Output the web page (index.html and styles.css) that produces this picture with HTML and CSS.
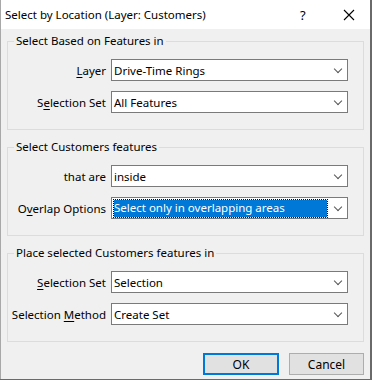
FILE: index.html
```html
<!DOCTYPE html>
<html>
<head>
<meta charset="utf-8">
<link rel="stylesheet" href="styles.css">
</head>
<body>
<div class="window">
  <div class="titlebar">
    <span class="title">Select by Location (Layer: Customers)</span>
    <span class="help">?</span>
    <span class="close"><svg width="12" height="12" viewBox="0 0 12 12"><path d="M1 1 L11 11 M11 1 L1 11" stroke="#000" stroke-width="1.1" fill="none"/></svg></span>
  </div>
  <div class="content">
    <fieldset class="group g1">
      <legend>Select Based on Features in</legend>
      <div class="row">
        <label><u>L</u>ayer</label>
        <div class="combo"><span class="val">Drive-Time Rings</span><span class="chev"></span></div>
      </div>
      <div class="row">
        <label>S<u>e</u>lection Set</label>
        <div class="combo"><span class="val">All Features</span><span class="chev"></span></div>
      </div>
    </fieldset>
    <fieldset class="group g2">
      <legend>Select Customers features</legend>
      <div class="row">
        <label>that are</label>
        <div class="combo"><span class="val">inside</span><span class="chev"></span></div>
      </div>
      <div class="row">
        <label>O<u>v</u>erlap Options</label>
        <div class="combo focused"><span class="val sel">Select only in overlapping areas</span><span class="chev"></span></div>
      </div>
    </fieldset>
    <fieldset class="group g3">
      <legend>Place selected Customers features in</legend>
      <div class="row">
        <label><u>S</u>election Set</label>
        <div class="combo"><span class="val">Selection</span><span class="chev"></span></div>
      </div>
      <div class="row">
        <label>Selection <u>M</u>ethod</label>
        <div class="combo"><span class="val">Create Set</span><span class="chev"></span></div>
      </div>
    </fieldset>
    <div class="buttons">
      <button class="btn ok">OK</button>
      <button class="btn">Cancel</button>
    </div>
  </div>
</div>
</body>
</html>
```
FILE: styles.css
```css
html, body {
  margin: 0;
  padding: 0;
  background: #6a6a6a;
  width: 372px;
  height: 380px;
  overflow: hidden;
}
.window {
  width: 369px;
  height: 379px;
  border-left: 1px solid #a8a8a8;
  background: #f0f0f0;
  font-family: "Noto Sans", sans-serif;
  font-size: 11.5px;
  color: #000;
  display: flex;
  flex-direction: column;
}
.titlebar {
  height: 29px;
  background: #fff;
  display: flex;
  align-items: center;
  flex-shrink: 0;
}
.title {
  padding-left: 4px;
  font-size: 11.5px;
  flex: 1;
}
.help {
  font-size: 13px;
  width: 14px;
  margin-right: 29px;
}
.close {
  width: 12px;
  height: 12px;
  margin-right: 15px;
  display: flex;
}
.content {
  padding: 4px 0 0 6px;
  display: flex;
  flex-direction: column;
}
.group {
  margin: 0;
  width: 357px;
  box-sizing: border-box;
  border: 1px solid #dcdcdc;
  padding: 10px 0 16px 0;
  display: flex;
  flex-direction: column;
  gap: 10px;
}
.g2, .g3 { margin-top: 9px; }
legend {
  margin-left: 6px;
  padding: 0 2px;
  font-size: 11.5px;
  line-height: 16px;
}
.row {
  display: flex;
  align-items: center;
  height: 22px;
}
label {
  width: 98px;
  text-align: right;
  padding-right: 5px;
  white-space: nowrap;
}
u { text-decoration-thickness: 1px; text-underline-offset: 2px; }
.combo {
  width: 237px;
  height: 22px;
  box-sizing: border-box;
  border: 1px solid #7a7a7a;
  background: #fff;
  display: flex;
  align-items: center;
  position: relative;
}
.val {
  padding-left: 2px;
  white-space: nowrap;
}
.focused .val.sel {
  margin-left: 2px;
  padding-left: 0;
  width: 213px;
  height: 17px;
  box-sizing: border-box;
  background: #0078d7;
  color: #fff;
  outline: 1px dotted #000;
  line-height: 16px;
}
.chev {
  position: absolute;
  right: 6px;
  top: 6px;
  width: 5px;
  height: 5px;
  border-right: 1px solid #555;
  border-bottom: 1px solid #555;
  transform: rotate(45deg);
}
.buttons {
  display: flex;
  justify-content: flex-end;
  gap: 10px;
  margin-top: 11px;
  padding-right: 6px;
}
.btn {
  font-family: inherit;
  font-size: 12px;
  height: 22px;
  width: 75px;
  background: #e1e1e1;
  border: 1px solid #adadad;
  padding: 0;
  color: #000;
}
.btn.ok {
  width: 76px;
  border: 2px solid #0078d7;
}
```
